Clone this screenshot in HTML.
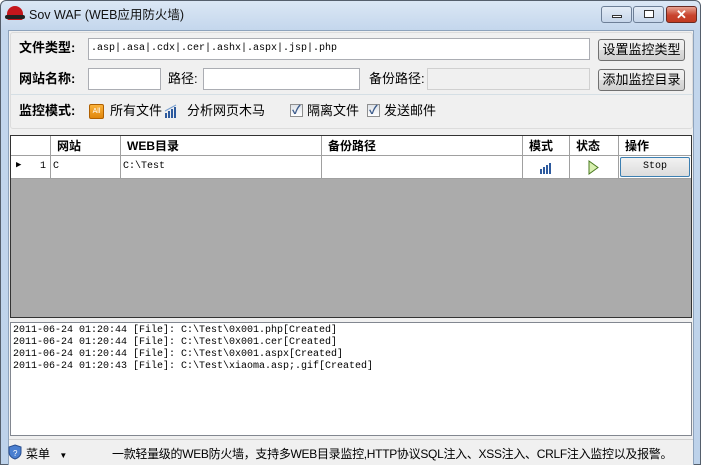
<!DOCTYPE html>
<html><head><meta charset="utf-8"><style>
*{box-sizing:border-box;margin:0;padding:0}
body{width:701px;height:465px;overflow:hidden;font-family:"Liberation Sans","Noto Sans CJK SC",sans-serif;font-size:12px;color:#000;background:#fff}
.win{position:absolute;left:0;top:0;width:701px;height:465px;background:linear-gradient(#dbe7f5,#c3d6ec 30px,#bdd2ea);border:1px solid #555f6c;border-radius:6px 6px 0 0}
.a{position:absolute}
.title{left:28px;top:6px;font-size:12.5px;color:#111;line-height:16px}
.client{left:7px;top:29px;width:686px;height:435px;background:#f0f0f0;border:1px solid #8ea3bc}
.inp{position:absolute;background:#fff;border:1px solid #abadb3;font-family:"Liberation Mono","Noto Sans CJK SC",monospace;font-size:10px;padding:4px 2px;line-height:12px}
.btn{position:absolute;border:1px solid #707070;border-radius:3px;background:linear-gradient(#f2f2f2,#ebebeb 50%,#dddddd 51%,#cfcfcf);font-size:13px;text-align:center;line-height:19px}
.lbl{position:absolute;font-size:13px;line-height:16px}
.b{font-weight:bold}
.cb{display:inline-block;width:13px;height:13px;border:1px solid #8f8f8f;background:linear-gradient(#dfe3e8,#fff);vertical-align:-2px;position:relative;margin-right:4px}
.cb:after{content:"✓";position:absolute;left:1px;top:-3px;font-size:12px;color:#3b5a8a;font-weight:bold}
.grid{left:9px;top:134px;width:682px;height:183px;background:#ababab;border:1px solid #333}
.hdr{position:absolute;top:0;height:20px;background:#fff;border-right:1px solid #a0a0a0;border-bottom:1px solid #a0a0a0;font-weight:bold;font-size:12px;padding:2px 6px;line-height:16px}
.cell{position:absolute;top:20px;height:23px;background:#fff;border-right:1px solid #a0a0a0;border-bottom:1px solid #a0a0a0;font-family:"Liberation Mono",monospace;font-size:10px;padding:5px 2px}
.log{left:9px;top:321px;width:682px;height:114px;background:#fff;border:1px solid #828790;font-family:"Liberation Mono",monospace;font-size:10px;line-height:12px;padding:2px 2px}
</style></head><body>
<div class="win">
 <div class="a" style="left:6px;top:5px;width:16px;height:14px;background:#c4161c;border-radius:8px 8px 2px 2px"></div>
 <div class="a" style="left:4px;top:14px;width:20px;height:4px;background:#222;border-radius:2px"></div>
 <div class="a title">Sov WAF (WEB应用防火墙)</div>
 <div class="a" style="left:600px;top:5px;width:31px;height:17px;border:1px solid #6d7f97;border-radius:3px;background:linear-gradient(#e4ecf6,#c6d6ea)"><div class="a" style="left:10px;top:8px;width:10px;height:3px;border:1px solid #333;background:#fff"></div></div>
 <div class="a" style="left:632px;top:5px;width:31px;height:17px;border:1px solid #6d7f97;border-radius:3px;background:linear-gradient(#e4ecf6,#c6d6ea)"><div class="a" style="left:10px;top:3px;width:10px;height:8px;border:1px solid #333;background:#fff"></div></div>
 <div class="a" style="left:665px;top:5px;width:31px;height:17px;border:1px solid #6b2a22;border-radius:3px;background:linear-gradient(#e8a493,#c8442f 55%,#c23b22);color:#fff;font-weight:bold;text-align:center;line-height:15px;font-size:13px">✕</div>
 <div class="a client">
  <div class="a" style="left:1px;top:1px;width:683px;height:97px;border:1px solid #dcdcdc;border-radius:3px"></div>
  <div class="a" style="left:2px;top:63px;width:682px;height:1px;background:#d5dfe5"></div>
  <div class="lbl b" style="left:10px;top:9px">文件类型:</div>
  <div class="inp" style="left:79px;top:7px;width:502px;height:22px">.asp|.asa|.cdx|.cer|.ashx|.aspx|.jsp|.php</div>
  <div class="btn" style="left:589px;top:8px;width:87px;height:22px">设置监控类型</div>
  <div class="lbl b" style="left:10px;top:40px">网站名称:</div>
  <div class="inp" style="left:79px;top:37px;width:73px;height:22px"></div>
  <div class="lbl" style="left:159px;top:40px">路径:</div>
  <div class="inp" style="left:194px;top:37px;width:157px;height:22px"></div>
  <div class="lbl" style="left:360px;top:40px">备份路径:</div>
  <div class="inp" style="left:418px;top:37px;width:163px;height:22px;background:#f0f0f0;border-color:#d0d0d0"></div>
  <div class="btn" style="left:589px;top:38px;width:87px;height:22px">添加监控目录</div>
  <div class="lbl b" style="left:10px;top:72px">监控模式:</div>
  <div class="a" style="left:80px;top:73px;width:15px;height:15px;background:linear-gradient(#fbb33c,#e0860c);border:1px solid #b06000;border-radius:2px;font-size:7px;color:#fff;text-align:center;line-height:13px">All</div>
  <div class="lbl" style="left:101px;top:72px">所有文件</div>
  <svg class="a" style="left:155px;top:73px" width="14" height="14"><rect x="1" y="9" width="2" height="5" fill="#2d5a9e"/><rect x="4" y="7" width="2" height="7" fill="#2d5a9e"/><rect x="7" y="5" width="2" height="9" fill="#2d5a9e"/><rect x="10" y="3" width="2" height="11" fill="#2d5a9e"/><path d="M1 7 L12 1" stroke="#7aa0d0" fill="none"/></svg>
  <div class="lbl" style="left:178px;top:72px">分析网页木马</div>
  <div class="lbl" style="left:281px;top:72px"><span class="cb"></span>隔离文件</div>
  <div class="lbl" style="left:358px;top:72px"><span class="cb"></span>发送邮件</div>
 </div>
 <div class="a grid">
  <div class="hdr" style="left:0;width:40px"></div>
  <div class="hdr" style="left:40px;width:70px">网站</div>
  <div class="hdr" style="left:110px;width:201px">WEB目录</div>
  <div class="hdr" style="left:311px;width:201px">备份路径</div>
  <div class="hdr" style="left:512px;width:47px">模式</div>
  <div class="hdr" style="left:559px;width:49px">状态</div>
  <div class="hdr" style="left:608px;width:72px;border-right:none">操作</div>
  <div class="cell" style="left:0;width:40px;text-align:right;padding-right:4px"><span style="position:absolute;left:5px;top:4px;font-size:9px">▶</span>1</div>
  <div class="cell" style="left:40px;width:70px">C</div>
  <div class="cell" style="left:110px;width:201px">C:\Test</div>
  <div class="cell" style="left:311px;width:201px"></div>
  <div class="cell" style="left:512px;width:47px"><svg class="a" style="left:16px;top:4px" width="14" height="14"><rect x="1" y="9" width="2" height="5" fill="#2d5a9e"/><rect x="4" y="7" width="2" height="7" fill="#2d5a9e"/><rect x="7" y="5" width="2" height="9" fill="#2d5a9e"/><rect x="10" y="3" width="2" height="11" fill="#2d5a9e"/></svg></div>
  <div class="cell" style="left:559px;width:49px"><svg class="a" style="left:18px;top:4px" width="11" height="15"><path d="M1 1 L10 7.5 L1 14 Z" fill="#d8f0b0" stroke="#4a7a20"/></svg></div>
  <div class="cell" style="left:608px;width:72px;border-right:none;padding:1px"><div style="height:20px;border:1px solid #3c7fb1;border-radius:2px;background:linear-gradient(#f2f2f2,#dcdcdc);text-align:center;line-height:18px;font-family:'Liberation Mono',monospace">Stop</div></div>
 </div>
 <div class="a log">2011-06-24 01:20:44 [File]: C:\Test\0x001.php[Created]<br>2011-06-24 01:20:44 [File]: C:\Test\0x001.cer[Created]<br>2011-06-24 01:20:44 [File]: C:\Test\0x001.aspx[Created]<br>2011-06-24 01:20:43 [File]: C:\Test\xiaoma.asp;.gif[Created]</div>
 <div class="a" style="left:8px;top:438px;width:684px;height:26px;border-top:1px solid #d0d0d0;background:#f0f0f0"></div>
 <svg class="a" style="left:7px;top:443px" width="14" height="16"><path d="M7 1 L13 3 L13 8 Q13 13 7 15 Q1 13 1 8 L1 3 Z" fill="#4a7fd0" stroke="#2a4f90"/><text x="5" y="12" font-size="8" fill="#fff">?</text></svg>
 <div class="a" style="left:25px;top:444px;font-size:12px">菜单 <span style="font-size:8px;margin-left:6px">▼</span></div>
 <div class="a" style="left:111px;top:444px;font-size:12px;letter-spacing:-0.3px">一款轻量级的WEB防火墙，支持多WEB目录监控,HTTP协议SQL注入、XSS注入、CRLF注入监控以及报警。</div>
</div>
</body></html>
